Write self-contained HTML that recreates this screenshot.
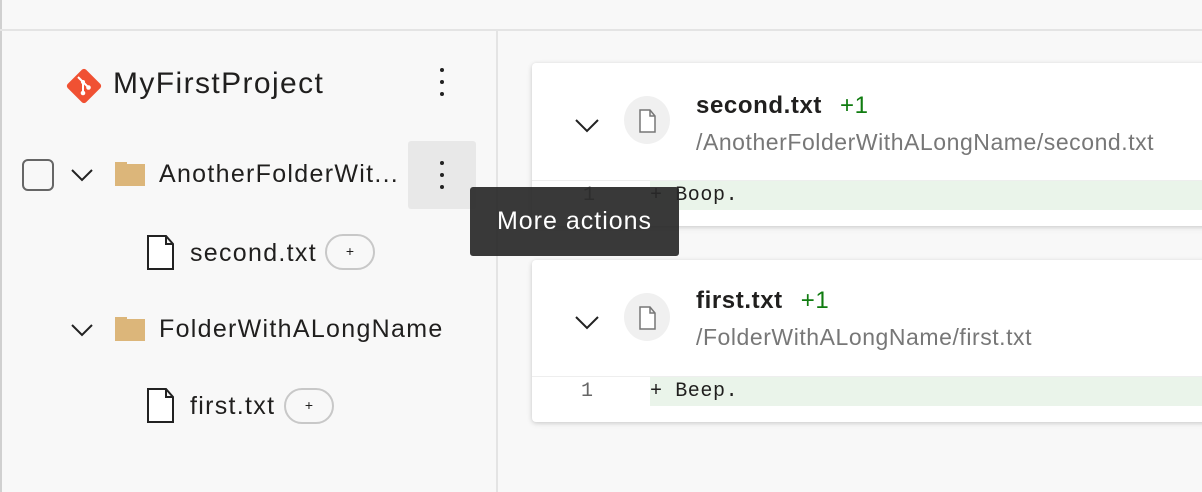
<!DOCTYPE html>
<html><head><meta charset="utf-8"><style>
*{margin:0;padding:0;box-sizing:border-box}
body{width:1202px;height:492px;overflow:hidden;background:#f8f8f8;font-family:"Liberation Sans",sans-serif;position:relative;color:#201f1e}
.a{position:absolute;white-space:nowrap}
.t{font-size:25px;letter-spacing:1.3px}
.card{position:absolute;left:532px;width:680px;background:#fff;border-radius:4px;box-shadow:0 1px 4px rgba(0,0,0,.15),0 2px 8px rgba(0,0,0,.06)}
.mono{font-family:"Liberation Mono",monospace;font-size:20px;letter-spacing:0.6px}
.plus{position:absolute;width:50px;height:36px;border:2px solid #c8c8c8;border-radius:18px;font-size:14px;text-align:center;line-height:31px}
</style></head><body>
<div class="a" style="left:0;top:0;width:2px;height:492px;background:#d0d0d0"></div>
<div class="a" style="left:0;top:29px;width:1202px;height:2px;background:#e4e4e4"></div>
<div class="a" style="left:496px;top:31px;width:2px;height:461px;background:#e4e4e4"></div>

<svg class="a" style="left:65px;top:67px" width="38" height="38" viewBox="0 0 38 38"><rect x="6" y="6" width="26" height="26" rx="3" transform="rotate(45 19 19)" fill="#f05133"/><g stroke="#fff" stroke-width="2" fill="none"><path d="M13 10l10 10M18 15v12"/></g><circle cx="18" cy="15" r="2" fill="#fff"/><circle cx="18" cy="26" r="2.3" fill="#fff"/><circle cx="23.5" cy="20.5" r="2.3" fill="#fff"/></svg>
<div class="a" style="left:113px;top:67px;font-size:30px;letter-spacing:1.4px">MyFirstProject</div>
<div class="a" style="left:432px;top:68px;width:20px"><div style="width:4px;height:4px;background:#222;border-radius:2px;margin:0 auto 8px"></div><div style="width:4px;height:4px;background:#222;border-radius:2px;margin:0 auto 8px"></div><div style="width:4px;height:4px;background:#222;border-radius:2px;margin:0 auto"></div></div>

<div class="a" style="left:22px;top:159px;width:32px;height:32px;border:2px solid #666;border-radius:6px"></div>
<svg class="a" style="left:70px;top:166px" width="24" height="16"><path d="M2 4l10 10 10-10" stroke="#222" stroke-width="2" fill="none"/></svg>
<div class="a" style="left:115px;top:164px;width:30px;height:22px;background:#dcb67a"></div>
<div class="a" style="left:115px;top:162px;width:12px;height:4px;background:#dcb67a"></div>
<div class="a t" style="left:159px;top:160px">AnotherFolderWit...</div>
<div class="a" style="left:408px;top:141px;width:68px;height:68px;background:#e8e8e8;border-radius:3px"></div>
<div class="a" style="left:432px;top:161px;width:20px"><div style="width:4px;height:4px;background:#222;border-radius:2px;margin:0 auto 8px"></div><div style="width:4px;height:4px;background:#222;border-radius:2px;margin:0 auto 8px"></div><div style="width:4px;height:4px;background:#222;border-radius:2px;margin:0 auto"></div></div>

<svg class="a" style="left:147px;top:235px" width="28" height="36"><path d="M1 1h18l7 8v25H1z M19 1v8h7" stroke="#222" stroke-width="2" fill="#fff"/></svg>
<div class="a t" style="left:190px;top:239px">second.txt</div>
<div class="plus" style="left:325px;top:234px">+</div>

<svg class="a" style="left:70px;top:321px" width="24" height="16"><path d="M2 4l10 10 10-10" stroke="#222" stroke-width="2" fill="none"/></svg>
<div class="a" style="left:115px;top:319px;width:30px;height:22px;background:#dcb67a"></div>
<div class="a" style="left:115px;top:317px;width:12px;height:4px;background:#dcb67a"></div>
<div class="a t" style="left:159px;top:315px">FolderWithALongName</div>

<svg class="a" style="left:147px;top:388px" width="28" height="36"><path d="M1 1h18l7 8v25H1z M19 1v8h7" stroke="#222" stroke-width="2" fill="#fff"/></svg>
<div class="a t" style="left:190px;top:392px">first.txt</div>
<div class="plus" style="left:284px;top:388px">+</div>

<div class="card" style="top:63px;height:163px">
 <svg class="a" style="left:42px;top:54px" width="26" height="16"><path d="M2 3l11 11 11-11" stroke="#222" stroke-width="2" fill="none"/></svg>
 <div class="a" style="left:92px;top:33px;width:46px;height:48px;border-radius:50%;background:#f0f0f0"></div>
 <svg class="a" style="left:107px;top:46px" width="18" height="24"><path d="M1 1h10l5 6v16H1z M11 1v6h5" stroke="#777" stroke-width="1.5" fill="#fff"/></svg>
 <div class="a" style="left:164px;top:29px;font-size:24px;font-weight:bold;letter-spacing:0.6px">second.txt<span style="color:#107c10;font-weight:normal;margin-left:18px">+1</span></div>
 <div class="a" style="left:164px;top:66px;font-size:23px;color:#777;letter-spacing:0.55px">/AnotherFolderWithALongName/second.txt</div>
 <div class="a" style="left:0;top:117px;width:680px;height:1px;background:#eee"></div>
 <div class="a" style="left:118px;top:118px;width:562px;height:29px;background:#eaf4ea"></div>
 <div class="a mono" style="left:51px;top:121px;color:#666">1</div>
 <div class="a mono" style="left:118px;top:121px">+ Boop.</div>
</div>

<div class="card" style="top:260px;height:162px">
 <svg class="a" style="left:42px;top:54px" width="26" height="16"><path d="M2 3l11 11 11-11" stroke="#222" stroke-width="2" fill="none"/></svg>
 <div class="a" style="left:92px;top:33px;width:46px;height:48px;border-radius:50%;background:#f0f0f0"></div>
 <svg class="a" style="left:107px;top:46px" width="18" height="24"><path d="M1 1h10l5 6v16H1z M11 1v6h5" stroke="#777" stroke-width="1.5" fill="#fff"/></svg>
 <div class="a" style="left:164px;top:27px;font-size:24px;font-weight:bold;letter-spacing:0.6px">first.txt<span style="color:#107c10;font-weight:normal;margin-left:18px">+1</span></div>
 <div class="a" style="left:164px;top:64px;font-size:23px;color:#777;letter-spacing:0.55px">/FolderWithALongName/first.txt</div>
 <div class="a" style="left:0;top:116px;width:680px;height:1px;background:#eee"></div>
 <div class="a" style="left:118px;top:117px;width:562px;height:29px;background:#eaf4ea"></div>
 <div class="a mono" style="left:49px;top:120px;color:#666">1</div>
 <div class="a mono" style="left:118px;top:120px">+ Beep.</div>
</div>

<div class="a" style="left:470px;top:187px;width:209px;height:69px;background:rgba(40,40,40,.92);border-radius:3px;color:#fff;font-size:25px;letter-spacing:1px;line-height:69px;text-align:center">More actions</div>
</body></html>
